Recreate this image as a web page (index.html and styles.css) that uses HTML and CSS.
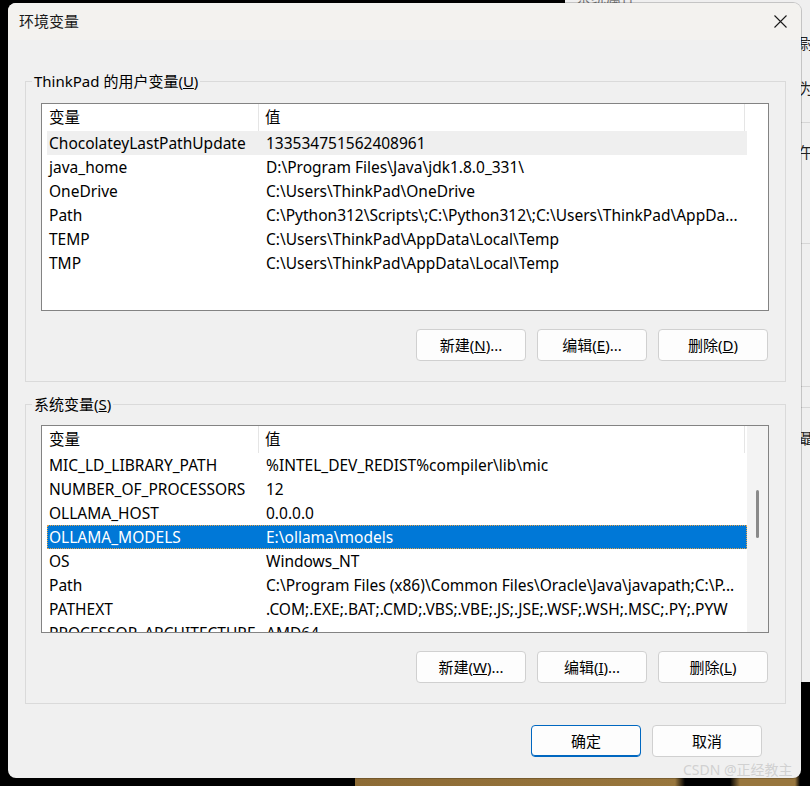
FILE: index.html
```html
<!DOCTYPE html>
<html lang="zh-CN">
<head>
<meta charset="utf-8">
<title>环境变量</title>
<link rel="stylesheet" href="styles.css">
</head>
<body>
<div class="desk">
  <div class="floor"></div>
  <div class="bgwin">
    <div class="bgwin-title">系统属性</div>
    <div class="frag fr1">尉</div>
    <div class="frag fr2">为</div>
    <div class="frag fr3">午</div>
    <div class="frag fr4">聶</div>
    <div class="bgline l1"></div>
    <div class="bgline l2"></div>
    <div class="bgline l3"></div>
    <div class="bgline l4"></div>
  </div>

  <div class="dialog">
    <div class="titlebar">
      <span class="title">环境变量</span>
      <svg class="close" width="13" height="13" viewBox="0 0 13 13"><path d="M0.5 0.5 L12.5 12.5 M12.5 0.5 L0.5 12.5" stroke="#1a1a1a" stroke-width="1.1" fill="none"/></svg>
    </div>
    <div class="body">
      <fieldset class="group">
        <legend>ThinkPad 的用户变量(<u>U</u>)</legend>
        <div class="list">
          <div class="list-view">
            <div class="hdr"><div class="h1">变量</div><div class="h2">值</div></div>
            <div class="row dim"><div class="c1">ChocolateyLastPathUpdate</div><div class="c2">133534751562408961</div></div>
            <div class="row"><div class="c1">java_home</div><div class="c2">D:\Program Files\Java\jdk1.8.0_331\</div></div>
            <div class="row"><div class="c1">OneDrive</div><div class="c2">C:\Users\ThinkPad\OneDrive</div></div>
            <div class="row"><div class="c1">Path</div><div class="c2">C:\Python312\Scripts\;C:\Python312\;C:\Users\ThinkPad\AppDa...</div></div>
            <div class="row"><div class="c1">TEMP</div><div class="c2">C:\Users\ThinkPad\AppData\Local\Temp</div></div>
            <div class="row"><div class="c1">TMP</div><div class="c2">C:\Users\ThinkPad\AppData\Local\Temp</div></div>
          </div>
          <div class="gutter"></div>
        </div>
        <div class="btns">
          <button class="btn">新建(<u>N</u>)...</button>
          <button class="btn">编辑(<u>E</u>)...</button>
          <button class="btn">删除(<u>D</u>)</button>
        </div>
      </fieldset>

      <fieldset class="group group2">
        <legend>系统变量(<u>S</u>)</legend>
        <div class="list">
          <div class="list-view">
            <div class="hdr"><div class="h1">变量</div><div class="h2">值</div></div>
            <div class="row"><div class="c1">MIC_LD_LIBRARY_PATH</div><div class="c2">%INTEL_DEV_REDIST%compiler\lib\mic</div></div>
            <div class="row"><div class="c1">NUMBER_OF_PROCESSORS</div><div class="c2">12</div></div>
            <div class="row"><div class="c1">OLLAMA_HOST</div><div class="c2">0.0.0.0</div></div>
            <div class="row sel"><div class="c1">OLLAMA_MODELS</div><div class="c2">E:\ollama\models</div></div>
            <div class="row"><div class="c1">OS</div><div class="c2">Windows_NT</div></div>
            <div class="row"><div class="c1">Path</div><div class="c2">C:\Program Files (x86)\Common Files\Oracle\Java\javapath;C:\P...</div></div>
            <div class="row"><div class="c1">PATHEXT</div><div class="c2">.COM;.EXE;.BAT;.CMD;.VBS;.VBE;.JS;.JSE;.WSF;.WSH;.MSC;.PY;.PYW</div></div>
            <div class="row"><div class="c1">PROCESSOR_ARCHITECTURE</div><div class="c2">AMD64</div></div>
          </div>
          <div class="gutter scroll"><div class="thumb"></div></div>
        </div>
        <div class="btns">
          <button class="btn">新建(<u>W</u>)...</button>
          <button class="btn">编辑(<u>I</u>)...</button>
          <button class="btn">删除(<u>L</u>)</button>
        </div>
      </fieldset>

      <div class="dlg-btns">
        <button class="btn primary">确定</button>
        <button class="btn">取消</button>
      </div>
    </div>
  </div>

  <div class="watermark">CSDN @正经教主</div>
</div>
</body>
</html>
```

FILE: styles.css
```css
html, body {
  margin: 0;
  padding: 0;
  background: #000;
}

.desk {
  position: relative;
  width: 810px;
  height: 786px;
  overflow: hidden;
  background: #000;
  font-family: "Noto Sans", "Noto Sans CJK SC", sans-serif;
  font-size: 15px;
  color: #000;
}

.floor {
  position: absolute;
  left: 355px;
  bottom: 0;
  width: 450px;
  height: 10px;
  background: linear-gradient(90deg, #8d6b35 0, #98763d 320px, #000 330px, #000 375px, #98763d 385px, #98763d 440px, #000 445px);
}

/* window behind the dialog */
.bgwin {
  position: absolute;
  left: 565px;
  top: -30px;
  width: 260px;
  height: 712px;
  background: #efefef;
}
.bgwin-title {
  position: absolute;
  left: 11px;
  top: 19px;
  font-family: "Noto Sans CJK SC", sans-serif;
  font-size: 15px;
  line-height: 16px;
  color: #7a7a7a;
}
.frag {
  position: absolute;
  left: 234px;
  font-family: "Noto Sans CJK SC", sans-serif;
  font-size: 15px;
  line-height: 18px;
  color: #222;
}
.fr1 { top: 64px; }
.fr2 { top: 109px; }
.fr3 { top: 173px; }
.fr4 { top: 459px; }
.bgline {
  position: absolute;
  left: 230px;
  width: 40px;
  height: 1px;
  background: #d6d6d6;
}
.l1 { top: 152px; }
.l2 { top: 273px; }
.l3 { top: 416px; }
.l4 { top: 437px; }

/* dialog */
.dialog {
  position: absolute;
  left: 8px;
  top: 3px;
  width: 793px;
  height: 775px;
  border-radius: 8px;
  overflow: hidden;
  background: #f0f0f0;
  box-shadow: 0 0 0 1px rgba(0, 0, 0, 0.18);
  display: flex;
  flex-direction: column;
}

.titlebar {
  height: 37px;
  box-sizing: border-box;
  flex: none;
  background: #f3f2ef;
  display: flex;
  align-items: center;
  justify-content: space-between;
  padding: 0 14px 2px 11px;
}
.title {
  font-family: "Noto Sans CJK SC", sans-serif;
  font-size: 15px;
  color: #1a1a1a;
}
.close {
  display: block;
  margin-top: 2px;
}

.body {
  flex: 1;
  display: flex;
  flex-direction: column;
  padding: 0 15px 0 17px;
}

.group {
  margin: 31px 0 0;
  padding: 12px 16px 20px 15px;
  border: 1px solid #dadada;
  min-width: 0;
}
.group2 {
  margin-top: 12px;
  padding-top: 11px;
}
.group legend {
  padding: 0 2px;
  margin-left: -9px;
  line-height: 20px;
  font-size: 15px;
  color: #000;
}

.list {
  height: 208px;
  box-sizing: border-box;
  border: 1px solid #838383;
  background: #fff;
  display: flex;
  overflow: hidden;
  font-size: 15.5px;
}
.list-view {
  width: 705px;
  flex: none;
  overflow: hidden;
}
.hdr {
  height: 27px;
  display: flex;
  align-items: center;
}
.h1 {
  width: 217px;
  box-sizing: border-box;
  padding-left: 7px;
  height: 27px;
  line-height: 27px;
  border-right: 1px solid #e5e5e5;
}
.h2 {
  width: 486px;
  box-sizing: border-box;
  padding-left: 6px;
  height: 27px;
  line-height: 27px;
  border-right: 1px solid #e5e5e5;
}
.row {
  margin-left: 5px;
  width: 700px;
  height: 24px;
  box-sizing: border-box;
  display: flex;
  align-items: center;
  line-height: 24px;
  white-space: nowrap;
}
.row.dim {
  background: #efefef;
}
.row.sel {
  background: #0078d7;
  color: #fff;
  outline: 1px dotted #e6a24a;
  outline-offset: -1px;
}
.c1 {
  width: 212px;
  flex: none;
  padding-left: 2px;
  box-sizing: border-box;
  overflow: hidden;
}
.c2 {
  flex: 1;
  padding-left: 7px;
  overflow: hidden;
}

.gutter {
  flex: 1;
  position: relative;
}
.gutter.scroll {
  background: #f3f3f3;
}
.thumb {
  position: absolute;
  left: 9px;
  top: 64px;
  width: 3px;
  height: 48px;
  border-radius: 2px;
  background: #8a8a8a;
}

.btns {
  display: flex;
  justify-content: flex-end;
  gap: 11px;
  margin-top: 18px;
  padding-right: 1px;
}

.btn {
  width: 110px;
  height: 32px;
  box-sizing: border-box;
  border: 1px solid #d0d0d0;
  border-radius: 4px;
  background: #fdfdfd;
  font-family: "Noto Sans", "Noto Sans CJK SC", sans-serif;
  font-size: 15px;
  color: #000;
  padding: 0;
  line-height: 30px;
}
.btn.primary {
  border-color: #0067c0;
  box-shadow: inset 0 -1px 0 #0067c0;
}

.dlg-btns {
  display: flex;
  justify-content: flex-end;
  gap: 11px;
  margin-top: 21px;
  padding-right: 24px;
}

.watermark {
  position: absolute;
  left: 683px;
  top: 761px;
  font-family: "Noto Sans", "Noto Sans CJK SC", sans-serif;
  font-size: 14px;
  line-height: 18px;
  color: rgba(205, 205, 205, 0.9);
  white-space: nowrap;
}
```
